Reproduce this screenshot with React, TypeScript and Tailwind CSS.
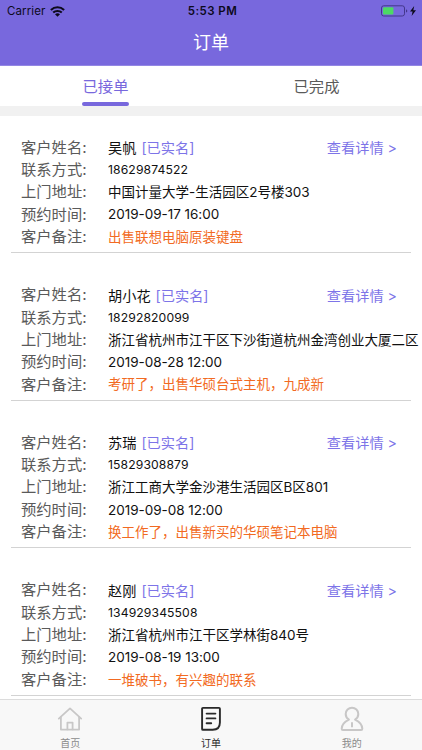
type Order = {
  name: string;
  phone: string;
  address: string;
  time: string;
  note: string;
};

const orders: Order[] = [
  { name: '吴帆', phone: '18629874522', address: '中国计量大学-生活园区2号楼303', time: '2019-09-17 16:00', note: '出售联想电脑原装键盘' },
  { name: '胡小花', phone: '18292820099', address: '浙江省杭州市江干区下沙街道杭州金湾创业大厦二区', time: '2019-08-28 12:00', note: '考研了，出售华硕台式主机，九成新' },
  { name: '苏瑞', phone: '15829308879', address: '浙江工商大学金沙港生活园区B区801', time: '2019-09-08 12:00', note: '换工作了，出售新买的华硕笔记本电脑' },
  { name: '赵刚', phone: '134929345508', address: '浙江省杭州市江干区学林街840号', time: '2019-08-19 13:00', note: '一堆破书，有兴趣的联系' },
];

function StatusBar() {
  return (
    <div className="grid h-[22px] grid-cols-3 items-center px-[7px] text-[11.5px] leading-[22px] text-[#0d0a1c]">
      <div className="flex items-center gap-[5px]">
        <span className="tracking-[0.1px]">Carrier</span>
        <svg width="15" height="11" viewBox="0 0 15 11" fill="none" stroke="currentColor" strokeWidth="2.1">
          <path d="M.9 4C4.7.4 10.3.4 14.1 4" />
          <path d="M3.2 6.6C5.6 4.4 9.4 4.4 11.8 6.6" />
          <path d="M7.5 10.7 5 8.2Q7.5 6.3 10 8.2Z" fill="currentColor" stroke="none" />
        </svg>
      </div>
      <span className="ml-[3px] text-center font-semibold tracking-[0.45px]">5:53 PM</span>
      <svg className="mr-[-2px] justify-self-end" width="36" height="12" viewBox="0 0 36 12">
        <rect x="0.5" y="0.8" width="23" height="10.2" rx="2.2" fill="none" stroke="#43378a" />
        <rect x="2" y="2.3" width="10.4" height="7.2" rx="1" fill="#4cd964" />
        <path d="M25 4.2v3.4q1.3-.5 1.3-1.7T25 4.2Z" fill="#43378a" />
        <path d="M33.2.9 29 6.4h2.6l-1 4.5L35 5.2h-2.7Z" fill="#0d0a1c" />
      </svg>
    </div>
  );
}

function Row({ label, children }: { label: string; children: React.ReactNode }) {
  return (
    <div className="flex h-[22.35px] items-center whitespace-nowrap">
      <span className="mt-[1px] w-[87px] shrink-0 text-[15.3px] text-[#5a5a5a]">{label}:</span>
      {children}
    </div>
  );
}

function OrderItem({ order }: { order: Order }) {
  return (
    <li className="mx-[11px] h-[147.6px] border-b border-[#d3d3d3] pl-[10px] pt-[31px] text-[13.5px] text-[#111]">
      <Row label="客户姓名">
        <span className="text-[14.2px]">{order.name}</span>
        <span className="ml-[5px] text-[14.2px] text-[#7d74e8]">[已实名]</span>
        <a className="ml-auto mr-[14px] text-[14.2px] text-[#7d74e8]">查看详情 &gt;</a>
      </Row>
      <Row label="联系方式"><span className="mt-[1px] text-[12.2px] tracking-[0.1px]">{order.phone}</span></Row>
      <Row label="上门地址"><span>{order.address}</span></Row>
      <Row label="预约时间"><span className="tracking-[-0.03px]">{order.time}</span></Row>
      <Row label="客户备注"><span className="text-[#f26a22]">{order.note}</span></Row>
    </li>
  );
}

function HomeIcon() {
  return (
    <svg width="26" height="26" viewBox="0 0 26 26" fill="none" stroke="#c8c7c7" strokeWidth="1.8" strokeLinejoin="round" strokeLinecap="round">
      <path d="M1.8 12.6 13 2.4l11.2 10.2" />
      <path d="M3.9 11.2v12.4h18.2V11.2" />
      <path d="M10.4 23.4v-6.8h5.2v6.8" />
    </svg>
  );
}

function OrderIcon() {
  return (
    <svg width="26" height="26" viewBox="0 0 26 26" fill="none" stroke="#292929" strokeWidth="1.9" strokeLinejoin="round" strokeLinecap="round">
      <path d="M5 1.9h16q.9 0 .9.9v13.8q0 7.2-7.2 7.2H5q-.9 0-.9-.9V2.8q0-.9.9-.9Z" />
      <path d="M8.6 7.6h8.8M8.6 12.4h8.8M8.6 17.2h4.6" />
    </svg>
  );
}

function UserIcon() {
  return (
    <svg width="26" height="26" viewBox="0 0 26 26" fill="none" stroke="#c8c7c7" strokeWidth="2" strokeLinejoin="round" strokeLinecap="butt">
      <path d="M9.9 13.6C7.6 12 6.7 10.2 6.7 7.9a6.3 6.1 0 0 1 12.6 0c0 2.3-.9 4.1-3.2 5.7 4.8 2.4 7.2 5 7.2 9.1 0 .8-.4 1.3-1.2 1.3H3.9c-.8 0-1.2-.5-1.2-1.3 0-4.1 2.4-6.7 7.2-9.1Z" />
      <path d="M13 16.2v5" />
    </svg>
  );
}

export default function App() {
  return (
    <div className="flex h-[750px] w-[422px] flex-col overflow-hidden bg-white font-['Inter','Noto_Sans_CJK_SC',sans-serif]">
      <header className="h-[66px] shrink-0 border-b border-[#9387e3] bg-[#7868dd]">
        <StatusBar />
        <h1 className="text-center text-[18px] leading-[42px] text-white">订单</h1>
      </header>
      <nav className="grid h-[40px] shrink-0 grid-cols-2 text-[15.3px] leading-[41px]">
        <div className="flex flex-col items-center text-[#7868dd]">
          <span className="h-[36px]">已接单</span>
          <span className="h-[4px] w-[47px] rounded-[2px] bg-[#7868dd]" />
        </div>
        <div className="text-center text-[#5a5a5a]">已完成</div>
      </nav>
      <div className="h-[10px] shrink-0 bg-[#f1f1f1]" />
      <main className="min-h-0 flex-1 overflow-hidden">
        <ul className="-mt-[10.6px]">
          {orders.map((order) => <OrderItem key={order.phone} order={order} />)}
        </ul>
      </main>
      <footer className="grid h-[51px] shrink-0 grid-cols-3 border-t border-[#dcdcdc] bg-[#f8f8f8] text-[10px] leading-[14px] text-[#8b8b8b]">
        <div className="flex flex-col items-center pt-[6px]"><HomeIcon /><span className="mt-[4px]">首页</span></div>
        <div className="flex flex-col items-center pt-[6px] text-[#292929]"><OrderIcon /><span className="mt-[4px]">订单</span></div>
        <div className="flex flex-col items-center pt-[6px]"><UserIcon /><span className="mt-[4px]">我的</span></div>
      </footer>
    </div>
  );
}
